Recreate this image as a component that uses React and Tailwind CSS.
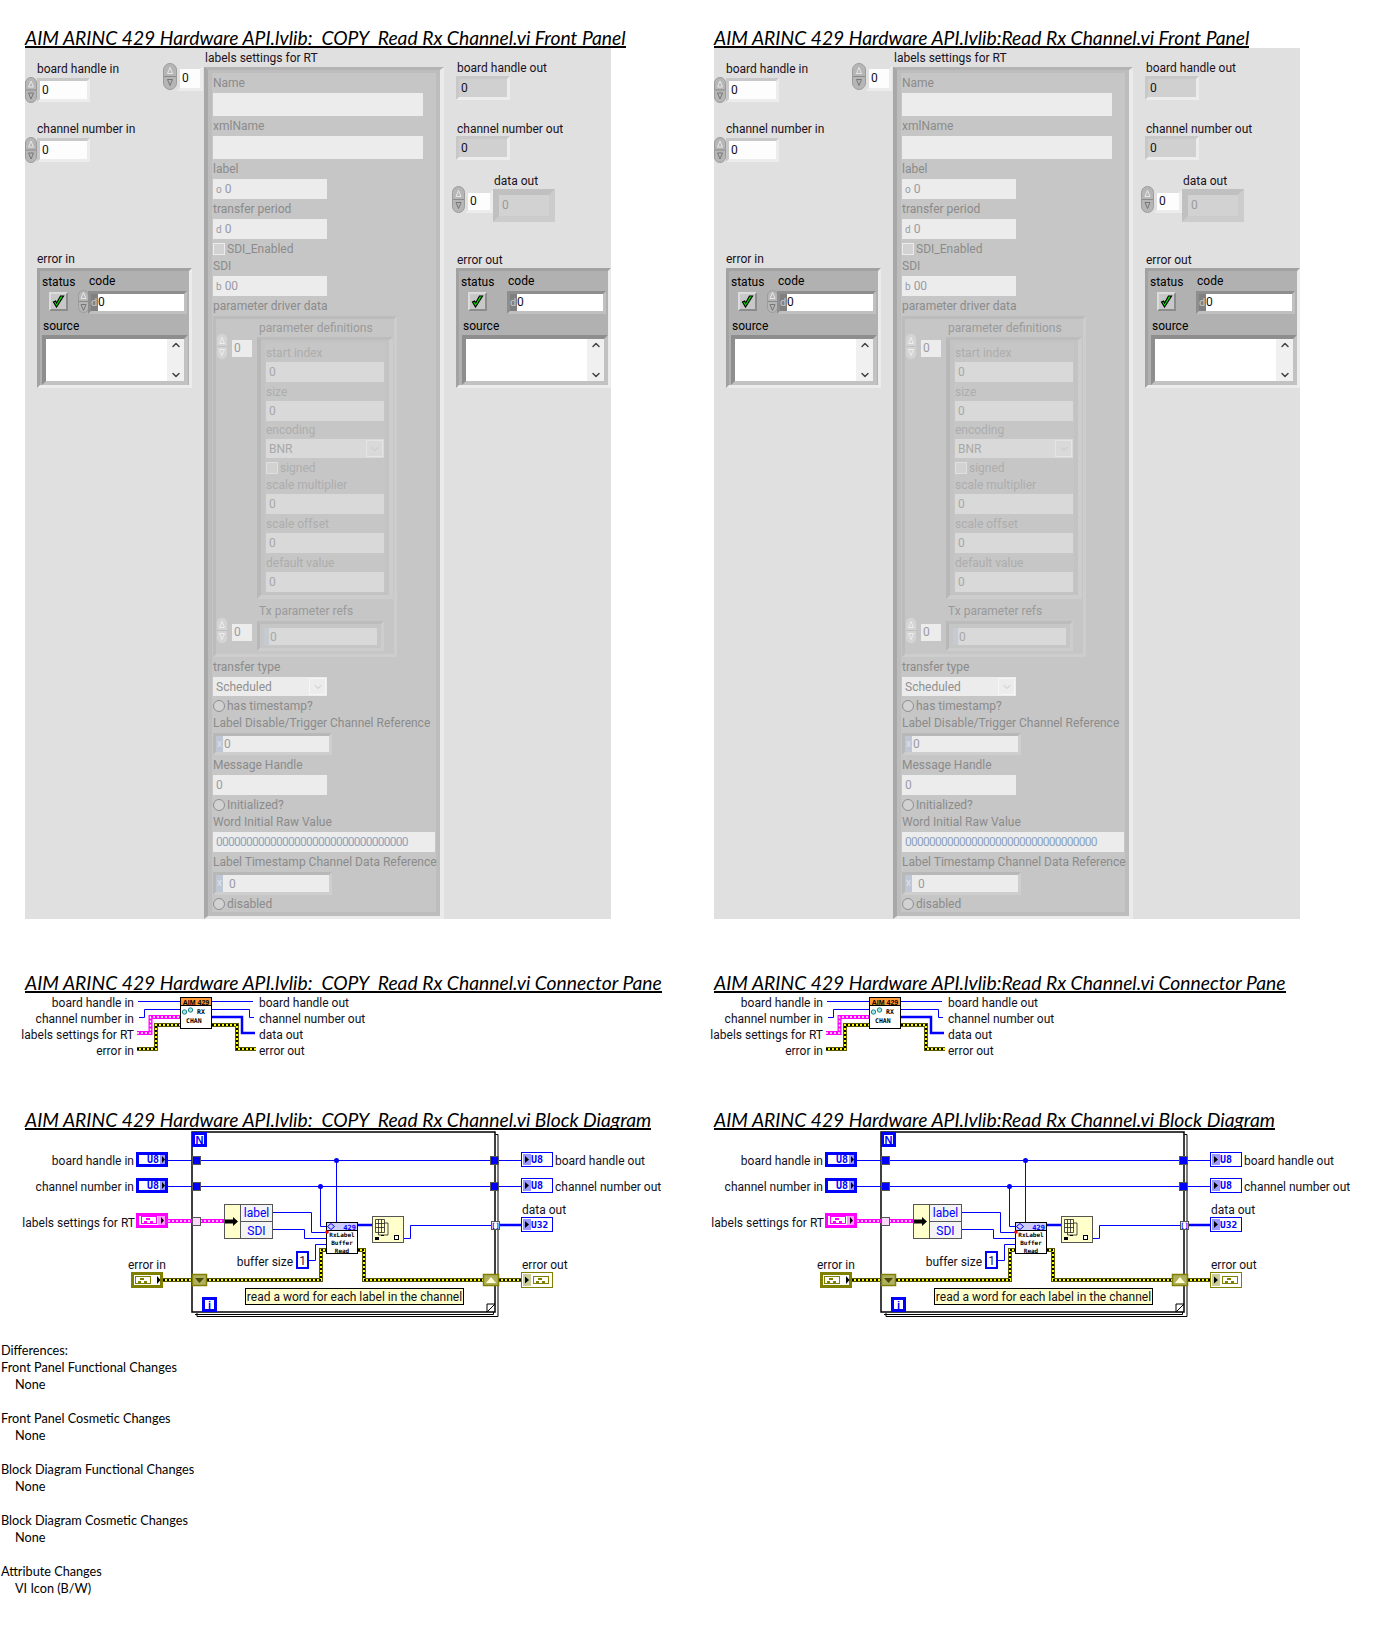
import React from 'react';
import { ChevronDown, ChevronUp } from 'lucide-react';

const leftTitle = 'AIM ARINC 429 Hardware API.lvlib:  COPY  Read Rx Channel.vi';
const rightTitle = 'AIM ARINC 429 Hardware API.lvlib:Read Rx Channel.vi';

// Little up/down pill next to numerics
const Spinner = ({ w = 12, h = 26, faded = false, className = '' }) => (
  <svg width={w} height={h} viewBox={`0 0 ${w} ${h}`} className={`block shrink-0 ${className}`}>
    <rect x="0.5" y="0.5" width={w - 1} height={h - 1} rx={w / 2 - 0.5} fill={faded ? '#d4d4d4' : '#b6b6b6'} stroke={faded ? '#c8c8c8' : '#9c9c9c'} />
    <line x1="1" y1={h / 2} x2={w - 1} y2={h / 2} stroke={faded ? '#c0c0c0' : '#8a8a8a'} />
    <path d={`M${w / 2 - 2.5} ${h / 2 - 3} L${w / 2} ${h / 2 - 9} L${w / 2 + 2.5} ${h / 2 - 3} Z`} fill="none" stroke={faded ? '#eeeeee' : '#e8e8e8'} />
    <path d={`M${w / 2 - 2.5} ${h / 2 + 3} L${w / 2} ${h / 2 + 9} L${w / 2 + 2.5} ${h / 2 + 3} Z`} fill="none" stroke={faded ? '#eeeeee' : '#777777'} />
  </svg>
);

const Text = ({ className = '', children }) => (
  <div className={`h-[16px] text-[12px] leading-[16px] whitespace-nowrap text-[#1a1020] ${className}`}>{children}</div>
);

const CheckMark = () => (
  <svg width="13" height="13" viewBox="0 0 13 13">
    <path d="M1.5 7 L4.5 12 L11.5 1 L8.5 1 L4.6 8 L3.6 6 Z" fill="#00f000" stroke="#000" strokeWidth="1.2" />
  </svg>
);

const ScrollBar = () => (
  <div className="w-[17px] bg-[#f0f0f0] flex flex-col items-center justify-between text-[#444]">
    <ChevronUp size={12} strokeWidth={3} />
    <ChevronDown size={12} strokeWidth={3} />
  </div>
);

// error in / error out clusters
const ErrorCluster = ({ out = false }) => (
  <div className="w-[155px] h-[120px] bg-[#b1b1b1] border-[3px] border-t-[#a2a2a2] border-l-[#a2a2a2] border-r-[#ececec] border-b-[#ececec] pt-[2px] pl-[2px]">
    <div className="flex h-[17px]">
      <Text className="w-[47px] mt-[1px] !text-black">status</Text>
      <Text className="!text-black">code</Text>
    </div>
    <div className="flex items-start h-[24px]">
      <div className="w-[19px] h-[19px] ml-[7px] mt-[2px] bg-[#c8c8c8] border-2 border-t-[#dcdcdc] border-l-[#dcdcdc] border-r-[#8c8c8c] border-b-[#8c8c8c] flex items-center justify-center shrink-0">
        <CheckMark />
      </div>
      {out ? <div className="w-[20px] shrink-0" /> : <Spinner w={11} h={23} className="ml-[10px] -mr-[1px]" />}
      <div className="mt-[1px] h-[23px] w-[99px] shrink-0 border-[3px] border-t-[#8e8e8e] border-l-[#8e8e8e] border-r-[#c0c0c0] border-b-[#c0c0c0] bg-white flex text-[12px] leading-[17px]">
        <span className="w-[7px] bg-[#808080] text-[#c4c4c4] text-[11px] shrink-0">d</span>
        <span className="text-[#10101c]">0</span>
      </div>
    </div>
    <Text className={`mt-[4px] !text-black ${out ? 'ml-[2px]' : 'ml-[1px]'}`}>source</Text>
    <div className={`mt-[1px] h-[50px] w-[146px] border-4 border-t-[#8e8e8e] border-l-[#8e8e8e] border-r-[#c2c2c2] border-b-[#c2c2c2] bg-white flex justify-end ${out ? 'ml-[1px]' : ''}`}>
      <ScrollBar />
    </div>
  </div>
);

const Control = ({ className = '', children, dark = false }) => (
  <div className={`h-[24px] w-[53px] border-[3px] pl-[2px] text-[12px] leading-[18px] text-[#10101c] border-t-[#c8c8c8] border-l-[#c8c8c8] border-r-[#ececec] border-b-[#ececec] ${dark ? 'bg-[#d0d0d0]' : 'bg-[#fdfdfd]'} ${className}`}>
    {children}
  </div>
);

// disabled label, top level (darker) or in the inner cluster (paler)
const Lab = ({ h = 20, pale = false, children }) => {
  const height = h === 20 ? 'h-[20px]' : h === 19 ? 'h-[19px]' : 'h-[18px]';
  return (
    <div className={`${height} flex items-center text-[12px] leading-[16px] whitespace-nowrap ${pale ? 'text-[#adadad]' : 'text-[#8b8b8b]'}`}>
      {children}
    </div>
  );
};

const Fld = ({ className = '', prefix, value, pale = false }) => (
  <div className={`flex items-center pl-[3px] text-[12px] ${pale ? 'bg-[#d9d9d9] text-[#a8a8a8]' : 'bg-[#ececec] text-[#9a9aa4]'} ${className}`}>
    {prefix && <span className="text-[10px] mr-[3px]">{prefix}</span>}
    {value}
  </div>
);

const Enum = ({ className = '', value, pale = false }) => (
  <div className={`flex items-center pl-[3px] pr-[1px] text-[12px] ${pale ? 'bg-[#d9d9d9] text-[#a8a8a8]' : 'bg-[#ececec] text-[#8f8f8f]'} ${className}`}>
    <span className="flex-1">{value}</span>
    <span className={`w-[17px] h-[17px] border flex items-center justify-center ${pale ? 'border-[#e4e4e4] text-[#b4b4b4]' : 'border-[#f6f6f6] text-[#a0a0a0]'}`}>
      <ChevronDown size={12} strokeWidth={1} />
    </span>
  </div>
);

const CheckRow = ({ label, round = false, pale = false, pt = 'pt-[4px]' }) => (
  <div className={`h-[17px] flex items-start ${pt} text-[12px] leading-[12px] whitespace-nowrap ${pale ? 'text-[#adadad]' : 'text-[#8b8b8b]'}`}>
    <span className={`w-[12px] h-[12px] mr-[2px] shrink-0 bg-[#d2d2d2] border ${round ? 'rounded-full border-[#8f8f8f]' : pale ? 'border-[#e0e0e0]' : 'border-[#ececec]'}`} />
    {label}
  </div>
);

const RefFld = ({ gap = false, className = '' }) => (
  <div className={`h-[22px] w-[119px] border-[3px] border-t-[#b8b8b8] border-l-[#b8b8b8] border-r-[#cecece] border-b-[#cecece] bg-[#ececec] flex items-center text-[12px] text-[#9a9aa4] ${className}`}>
    <span className={`w-[7px] self-stretch bg-[#bfc6d4] text-[#e0e4ec] text-[10px] leading-[16px] text-center shrink-0 ${gap ? 'mr-[6px]' : 'mr-[1px]'}`}>x</span>
    0
  </div>
);

const ArrayIndex = ({ className = '' }) => (
  <div className={`w-[41px] shrink-0 ${className}`}>
    <div className="flex items-center">
      <Spinner w={12} h={27} faded />
      <div className="w-[20px] h-[17px] ml-[4px] mt-[4px] bg-[#ececec] text-[12px] leading-[17px] pl-[2px] text-[#9a9aa4]">0</div>
    </div>
  </div>
);

const LabelsCluster = () => (
  <div className="w-[240px] h-[852px] border-4 border-t-[3px] border-b-[3px] border-t-[#b4b4b4] border-l-[#a8a8a8] border-r-[#ebebeb] border-b-[#ebebeb]">
    <div className="h-full border-4 border-t-[3px] border-[#bdbdbd] bg-[#c6c6c6] pl-[1px]">
      <Lab>Name</Lab>
      <Fld className="w-[210px] h-[23px]" />
      <Lab>xmlName</Lab>
      <Fld className="w-[210px] h-[23px]" />
      <Lab>label</Lab>
      <Fld className="w-[114px] h-[20px]" prefix="o" value="0" />
      <Lab>transfer period</Lab>
      <Fld className="w-[114px] h-[20px]" prefix="d" value="0" />
      <CheckRow label="SDI_Enabled" />
      <Lab>SDI</Lab>
      <Fld className="w-[114px] h-[20px]" prefix="b" value="00" />
      <Lab>parameter driver data</Lab>

      {/* parameter definitions array */}
      <div className="w-[184px] h-[341px] border-[3px] border-t-[#bcbcbc] border-l-[#bcbcbc] border-r-[#cdcdcd] border-b-[#cdcdcd] bg-[#c6c6c6]">
        <div className="flex">
          <ArrayIndex className="pt-[14px]" />
          <div>
            <div className="h-[18px] flex items-center pl-[2px] text-[12px] text-[#9a9a9a] whitespace-nowrap">parameter definitions</div>
            <div className="w-[136px] h-[262px] border-4 border-t-[3px] border-t-[#bcbcbc] border-l-[#b8b8b8] border-r-[#cdcdcd] border-b-[#cdcdcd]">
              <div className="h-full border-4 border-t-[3px] border-[#c3c3c3] bg-[#c6c6c6] pl-[1px]">
                <Lab h={19} pale>start index</Lab>
                <Fld pale className="w-[118px] h-[20px]" value="0" />
                <Lab h={19} pale>size</Lab>
                <Fld pale className="w-[118px] h-[20px]" value="0" />
                <Lab h={18} pale>encoding</Lab>
                <Enum pale className="w-[118px] h-[19px]" value="BNR" />
                <CheckRow pale label="signed" />
                <Lab h={19} pale>scale multiplier</Lab>
                <Fld pale className="w-[118px] h-[20px]" value="0" />
                <Lab h={19} pale>scale offset</Lab>
                <Fld pale className="w-[118px] h-[20px]" value="0" />
                <Lab h={19} pale>default value</Lab>
                <Fld pale className="w-[118px] h-[20px]" value="0" />
              </div>
            </div>
          </div>
        </div>
        <div className="flex mt-[2px]">
          <ArrayIndex className="pt-[16px]" />
          <div>
            <div className="h-[20px] flex items-center pl-[2px] text-[12px] text-[#9a9a9a] whitespace-nowrap">Tx parameter refs</div>
            <div className="w-[127px] h-[30px] border-[3px] border-t-[#bcbcbc] border-l-[#b8b8b8] border-r-[#cdcdcd] border-b-[#cdcdcd] p-[4px]">
              <div className="h-[17px] bg-[#d9d9d9] flex items-center text-[12px] text-[#a8a8a8]">
                <span className="w-[5px] self-stretch bg-[#c6cad2] mr-[1px]" />0
              </div>
            </div>
          </div>
        </div>
      </div>

      <Lab>transfer type</Lab>
      <Enum className="w-[114px] h-[19px]" value="Scheduled" />
      <CheckRow round label="has timestamp?" />
      <Lab>Label Disable/Trigger Channel Reference</Lab>
      <RefFld />
      <Lab>Message Handle</Lab>
      <Fld className="w-[114px] h-[20px]" value="0" />
      <CheckRow round label="Initialized?" />
      <Lab>Word Initial Raw Value</Lab>
      <Fld className="w-[222px] h-[20px] !text-[#8ea3bd] tracking-[-0.75px]" value="00000000000000000000000000000000" />
      <Lab>Label Timestamp Channel Data Reference</Lab>
      <RefFld gap className="!h-[23px]" />
      <CheckRow round label="disabled" pt="pt-[3px]" />
    </div>
  </div>
);

const FrontPanel = () => (
  <div className="flex w-[586px] h-[871px] bg-[#e0e0e0]">
    {/* inputs */}
    <div className="w-[138px] shrink-0 pt-[13px]">
      <Text className="ml-[12px]">board handle in</Text>
      <div className="flex items-start">
        <Spinner />
        <Control className="mt-[1px]">0</Control>
      </div>
      <Text className="ml-[12px] mt-[18px]">channel number in</Text>
      <div className="flex items-start">
        <Spinner />
        <Control className="mt-[1px]">0</Control>
      </div>
      <Text className="ml-[12px] mt-[88px]">error in</Text>
      <div className="ml-[12px] mt-[1px]">
        <ErrorCluster />
      </div>
    </div>

    {/* labels array index */}
    <div className="w-[41px] shrink-0 pt-[15px] flex items-start">
      <Spinner w={14} h={27} />
      <div className="mt-[3px] w-[26px] h-[25px] border-[3px] border-[#e0e0e0] border-r-[#ececec] border-b-[#ececec] bg-[#fdfdfd] pl-[2px] text-[12px] leading-[18px] text-[#10101c]">0</div>
    </div>

    {/* labels settings for RT */}
    <div className="w-[240px] shrink-0 pt-[2px]">
      <Text className="ml-[1px] mb-[1px]">labels settings for RT</Text>
      <LabelsCluster />
    </div>

    {/* outputs */}
    <div className="pl-[8px] pt-[12px]">
      <Text className="ml-[5px]">board handle out</Text>
      <Control dark className="ml-[4px] !w-[54px] leading-[19px]">0</Control>
      <Text className="ml-[5px] mt-[21px]">channel number out</Text>
      <Control dark className="ml-[4px] !w-[54px] leading-[19px] -mt-[1px]">0</Control>
      <Text className="ml-[42px] mt-[13px] -mb-[3px]">data out</Text>
      <div className="flex items-start">
        <Spinner w={13} h={27} />
        <div className="mt-[4px] w-[28px] h-[23px] border-[3px] border-[#e0e0e0] border-r-[#ececec] border-b-[#ececec] bg-[#fdfdfd] pl-[2px] text-[12px] leading-[17px] text-[#10101c]">0</div>
        <div className="mt-[3px] w-[62px] h-[33px] border-[6px] border-t-[#c0c0c0] border-l-[#c0c0c0] border-r-[#cccccc] border-b-[#cccccc] bg-[#d2d2d2] pl-[3px] text-[12px] leading-[21px] text-[#9a9a9a]">0</div>
      </div>
      <Text className="ml-[5px] mt-[30px]">error out</Text>
      <div className="ml-[4px]">
        <ErrorCluster out />
      </div>
    </div>
  </div>
);

/* ---- wires and block diagram parts ---- */
const Wire = ({ d, w = 1 }) => <path d={d} fill="none" stroke="#0000ff" strokeWidth={w} />;

const PinkWire = ({ d }) => (
  <g fill="none">
    <path d={d} stroke="#ff00ff" strokeWidth="4" />
    <path d={d} stroke="#ffffff" strokeWidth="1.5" strokeDasharray="2 2" />
  </g>
);

const ErrWire = ({ d }) => (
  <g fill="none">
    <path d={d} stroke="#5a5a00" strokeWidth="4" />
    <path d={d} stroke="#ffff00" strokeWidth="2" />
    <path d={d} stroke="#000000" strokeWidth="2" strokeDasharray="2 2" />
  </g>
);

const Label = ({ x, y, end = false, children }) => (
  <text x={x} y={y + 4.5} textAnchor={end ? 'end' : 'start'} fontSize="12" fill="#10101c" fontFamily="Roboto, sans-serif">
    {children}
  </text>
);

const Mono = ({ x, y, size = 9, fill = '#0000ff', anchor = 'start', children }) => (
  <text x={x} y={y} fontSize={size} fontWeight="700" fill={fill} textAnchor={anchor} fontFamily="'DejaVu Sans Mono', monospace">
    {children}
  </text>
);

const ClusterGlyph = ({ x, y, color }) => (
  <g fill={color}>
    <rect x={x} y={y} width="16" height="1" />
    <rect x={x} y={y + 7} width="16" height="1" />
    <rect x={x} y={y} width="1" height="8" />
    <rect x={x + 15} y={y} width="1" height="8" />
    <rect x={x + 5} y={y + 2} width="4" height="2" />
    <rect x={x + 3} y={y + 5} width="3" height="2" />
    <rect x={x + 9} y={y + 5} width="3" height="2" />
  </g>
);

const U8Control = ({ x, y }) => (
  <g>
    <rect x={x + 1.5} y={y + 1.5} width="29" height="12" fill="#fff" stroke="#0000ff" strokeWidth="3" />
    <rect x={x + 24} y={y + 3} width="5" height="9" fill="#9999ff" />
    <path d={`M${x + 26} ${y + 4} L${x + 29} ${y + 7.5} L${x + 26} ${y + 11} Z`} fill="#000" />
    <Mono x={x + 11} y={y + 11} size={10}>U8</Mono>
  </g>
);

const U8Indicator = ({ x, y, label = 'U8', w = 32 }) => (
  <g>
    <rect x={x + 0.5} y={y + 0.5} width={w - 1} height="14" fill="#fff" stroke="#0000ff" />
    <rect x={x + 2} y={y + 2} width="8" height="11" fill="#9999ff" />
    <path d={`M${x + 4} ${y + 4} L${x + 8} ${y + 7.5} L${x + 4} ${y + 11} Z`} fill="#000" />
    <Mono x={x + 10} y={y + 11} size={label === 'U8' ? 10 : 9.5}>{label}</Mono>
  </g>
);

const Tunnel = ({ x, y, w = 8, h = 8, fill = '#0000ff', stroke = '#555' }) => (
  <rect x={x + 0.5} y={y + 0.5} width={w} height={h} fill={fill} stroke={stroke} />
);

const ConnectorPane = () => (
  <svg width="640" height="74" viewBox="25 993 640 74" className="block overflow-visible">
    <Label x={134} y={1002} end>board handle in</Label>
    <Label x={134} y={1018} end>channel number in</Label>
    <Label x={134} y={1034} end>labels settings for RT</Label>
    <Label x={134} y={1050} end>error in</Label>
    <Label x={259} y={1002}>board handle out</Label>
    <Label x={259} y={1018}>channel number out</Label>
    <Label x={259} y={1034}>data out</Label>
    <Label x={259} y={1050}>error out</Label>

    <Wire d="M138 1001.5 H180" />
    <Wire d="M139 1017.5 H144.5 V1009.5 H180" />
    <PinkWire d="M137 1033 H150.5 V1017 H180" />
    <ErrWire d="M137 1049 H156 V1025 H180" />
    <Wire d="M212 1001.5 H253" />
    <Wire d="M212 1009.5 H249.5 V1017.5 H254" />
    <Wire d="M212 1017 H242 V1033 H255" w={2.5} />
    <ErrWire d="M212 1025 H237 V1049 H256" />

    {/* VI icon */}
    <rect x="180.5" y="997.5" width="31" height="31" fill="#fff" stroke="#000" />
    <rect x="181" y="998" width="30" height="7.5" fill="#ff9933" />
    <line x1="181" y1="1005.5" x2="211" y2="1005.5" stroke="#000" />
    <text x="196" y="1004.5" textAnchor="middle" fontSize="7" fontWeight="700" fill="#000" fontFamily="'Liberation Sans', sans-serif">AIM 429</text>
    <circle cx="184.5" cy="1012" r="2.2" fill="#a0e8e8" stroke="#208080" />
    <circle cx="190.5" cy="1010" r="2.2" fill="#a0e8e8" stroke="#208080" />
    <Mono x={197} y={1014} size={6.5} fill="#000">RX</Mono>
    <Mono x={186} y={1023} size={6.5} fill="#000">CHAN</Mono>
  </svg>
);

const BlockDiagram = () => (
  <svg width="640" height="195" viewBox="25 1130 640 195" className="block overflow-visible">
    {/* while loop frame */}
    <path d="M495.5 1134.5 H498 V1316.5 H197 V1313" fill="none" stroke="#000" />
    <path d="M493.5 1136 V1314.5 H195" fill="none" stroke="#000" />
    <rect x="192" y="1132" width="303" height="180" fill="#fff" stroke="#000" strokeWidth="1.5" />
    <path d="M487 1312 L495 1304 H487 Z" fill="#fff" stroke="#000" />

    <Label x={134} y={1160} end>board handle in</Label>
    <Label x={134} y={1186} end>channel number in</Label>
    <Label x={135} y={1222} end>labels settings for RT</Label>
    <Label x={128} y={1264}>error in</Label>
    <Label x={293} y={1261} end>buffer size</Label>
    <Label x={555} y={1160}>board handle out</Label>
    <Label x={555} y={1186}>channel number out</Label>
    <Label x={522} y={1209}>data out</Label>
    <Label x={522} y={1264}>error out</Label>

    {/* wires */}
    <Wire d="M168 1160.5 H521" />
    <Wire d="M168 1186.5 H521" />
    <Wire d="M336.5 1160 V1222" />
    <Wire d="M320.5 1186 V1226.5 H326" />
    <Wire d="M273 1212.5 H311.5 V1232.5 H326" />
    <Wire d="M273 1229.5 H304.5 V1238.5 H326" />
    <Wire d="M309 1260.5 H315.5 V1244.5 H326" />
    <Wire d="M358 1225 H372" w={2.5} />
    <Wire d="M404 1238.5 H410.5 V1225.5 H491" />
    <Wire d="M499 1225 H521" w={2.5} />
    <circle cx="336.5" cy="1160.5" r="2.5" fill="#0000ff" />
    <circle cx="320.5" cy="1186.5" r="2.5" fill="#0000ff" />
    <PinkWire d="M168 1221 H224" />
    <ErrWire d="M163 1280 H321 V1250 H326" />
    <ErrWire d="M358 1250 H364 V1280 H483" />
    <ErrWire d="M499 1280 H521" />

    {/* terminals */}
    <U8Control x={136} y={1152} />
    <U8Control x={136} y={1178} />
    <rect x="137.5" y="1214.5" width="29" height="12" fill="#fff" stroke="#ff00ff" strokeWidth="3" />
    <ClusterGlyph x={141} y={1216} color="#ff00ff" />
    <rect x="158" y="1216" width="7" height="9" fill="#ff99ff" />
    <path d="M161 1217 L164 1220.5 L161 1224 Z" fill="#000" />

    <rect x="132.5" y="1273.5" width="29" height="13" fill="#fff" stroke="#808000" strokeWidth="3" />
    <ClusterGlyph x={135} y={1276} color="#808000" />
    <path d="M157 1276 L160.5 1280 L157 1284 Z" fill="#000" />

    <U8Indicator x={521} y={1152} />
    <U8Indicator x={521} y={1178} />
    <U8Indicator x={521} y={1217} label="U32" />
    <rect x="521.5" y="1272.5" width="31" height="15" fill="#fff" stroke="#808000" />
    <rect x="523" y="1274" width="8" height="12" fill="#cccc99" />
    <path d="M525 1276.5 L529 1280 L525 1283.5 Z" fill="#000" />
    <ClusterGlyph x={533} y={1276} color="#808000" />

    {/* N and i */}
    <rect x="193.5" y="1133.5" width="12" height="12" fill="#fff" stroke="#0000ff" strokeWidth="3" />
    <text x="199.5" y="1143.5" textAnchor="middle" fontSize="11" fontWeight="700" fill="#0000ff" fontFamily="'Liberation Sans', sans-serif">N</text>
    <rect x="203.5" y="1298.5" width="12" height="12" fill="#fff" stroke="#0000ff" strokeWidth="3" />
    <text x="209.5" y="1308.5" textAnchor="middle" fontSize="11" fontWeight="700" fill="#0000ff" fontFamily="'Liberation Sans', sans-serif">i</text>

    {/* tunnels */}
    <Tunnel x={192} y={1156} />
    <Tunnel x={192} y={1182} />
    <Tunnel x={192} y={1217} fill="#ffd8ff" />
    <Tunnel x={490} y={1156} />
    <Tunnel x={490} y={1182} />
    <Tunnel x={491} y={1221} fill="#ffffff" />
    <text x="495.5" y="1228" textAnchor="middle" fontSize="7" fontWeight="700" fill="#0000ff" fontFamily="'DejaVu Sans Mono', monospace">[]</text>
    <rect x="192.5" y="1274.5" width="14" height="11" fill="#b0b060" stroke="#808000" strokeWidth="1.5" />
    <path d="M195 1278 H204 L199.5 1283 Z" fill="#4a4a00" />
    <rect x="483.5" y="1274.5" width="15" height="11" fill="#b0b060" stroke="#808000" strokeWidth="1.5" />
    <path d="M486 1283 H496 L491 1277 Z" fill="#ffffcc" />

    {/* unbundle by name */}
    <rect x="224.5" y="1204.5" width="48" height="34" fill="#f4f4f4" stroke="#555" />
    <rect x="225" y="1205" width="15" height="33" fill="#ffffcc" />
    <line x1="240.5" y1="1204" x2="240.5" y2="1239" stroke="#555" />
    <line x1="240" y1="1221.5" x2="273" y2="1221.5" stroke="#555" />
    <path d="M225 1219.5 H233 V1217 L238 1221.5 L233 1226 V1223.5 H225 Z" fill="#000" />
    <text x="256.5" y="1217" textAnchor="middle" fontSize="12" fill="#0000ff" fontFamily="Roboto, sans-serif">label</text>
    <text x="256.5" y="1235" textAnchor="middle" fontSize="12" fill="#0000ff" fontFamily="Roboto, sans-serif">SDI</text>

    {/* buffer size constant */}
    <rect x="297" y="1252" width="11" height="16" fill="#fff" stroke="#0000ff" strokeWidth="2" />
    <text x="302.5" y="1265" textAnchor="middle" fontSize="12" fill="#301040" fontFamily="Roboto, sans-serif">1</text>

    {/* read VI */}
    <rect x="326.5" y="1222.5" width="31" height="31" fill="#fff" stroke="#000" />
    <rect x="327" y="1223" width="30" height="7" fill="#ccccff" />
    <line x1="327" y1="1230.5" x2="357" y2="1230.5" stroke="#000" />
    <path d="M331 1223.5 L334.5 1226.5 L331 1229.5 L327.5 1226.5 Z" fill="none" stroke="#0000ff" />
    <Mono x={356} y={1229.5} size={7} anchor="end">429</Mono>
    <Mono x={342} y={1237} size={6} fill="#000" anchor="middle">RxLabel</Mono>
    <Mono x={342} y={1245} size={6} fill="#000" anchor="middle">Buffer</Mono>
    <Mono x={342} y={1253} size={6} fill="#000" anchor="middle">Read</Mono>
    <circle cx="327" cy="1232" r="1.8" fill="#ff0000" />

    {/* array node */}
    <rect x="372.5" y="1216.5" width="31" height="26" fill="#ffffcc" stroke="#555" />
    <path d="M375.5 1219.5 H384.5 V1232.5 H375.5 Z M378.5 1219.5 V1232.5 M381.5 1219.5 V1232.5 M375.5 1223.5 H384.5 M375.5 1227.5 H384.5 M384.5 1223 H388 V1235 H378.5 V1232.5" fill="none" stroke="#222" strokeWidth="0.8" />
    <rect x="375" y="1237" width="4" height="3" fill="#000" />
    <rect x="381" y="1235" width="3" height="1" fill="#000" />
    <rect x="394.5" y="1235.5" width="4" height="4" fill="#fff" stroke="#000" />

    {/* comment */}
    <rect x="245.5" y="1288.5" width="218" height="16" fill="#ffffcc" stroke="#000" />
    <text x="354.5" y="1301" textAnchor="middle" fontSize="12" fill="#10101c" fontFamily="Roboto, sans-serif">read a word for each label in the channel</text>
  </svg>
);

const Title = ({ className = '', children }) => (
  <div className={`h-[22px] ${className}`}>
    <span className="inline-block h-[22px] border-b-2 border-black font-['Lato',sans-serif] italic text-[19.3px] leading-[23px] whitespace-pre text-black">
      {children}
    </span>
  </div>
);

const Column = ({ title }) => (
  <div className="w-[640px] shrink-0">
    <Title>{title} Front Panel</Title>
    <FrontPanel />
    <Title className="mt-[52px]">{title} Connector Pane</Title>
    <ConnectorPane />
    <Title className="mt-[41px]">{title} Block Diagram</Title>
    <BlockDiagram />
  </div>
);

const diffLines = [
  ['Differences:'],
  ['Front Panel Functional Changes'],
  ['None', true],
  [''],
  ['Front Panel Cosmetic Changes'],
  ['None', true],
  [''],
  ['Block Diagram Functional Changes'],
  ['None', true],
  [''],
  ['Block Diagram Cosmetic Changes'],
  ['None', true],
  [''],
  ['Attribute Changes'],
  ['VI Icon (B/W)', true],
];

export default function App() {
  return (
    <div className="w-[1378px] h-[1631px] bg-white overflow-hidden font-['Roboto',sans-serif]">
      <div className="flex gap-[49px] pl-[25px] pt-[26px]">
        <Column title={leftTitle} />
        <Column title={rightTitle} />
      </div>
      <div className="mt-[17px] pl-[1px] font-['Lato',sans-serif] text-[12.7px] leading-[17px] text-black">
        {diffLines.map(([text, indent], i) => (
          <div key={i} className={`h-[17px] ${indent ? 'pl-[14px]' : ''}`}>{text}</div>
        ))}
      </div>
    </div>
  );
}
